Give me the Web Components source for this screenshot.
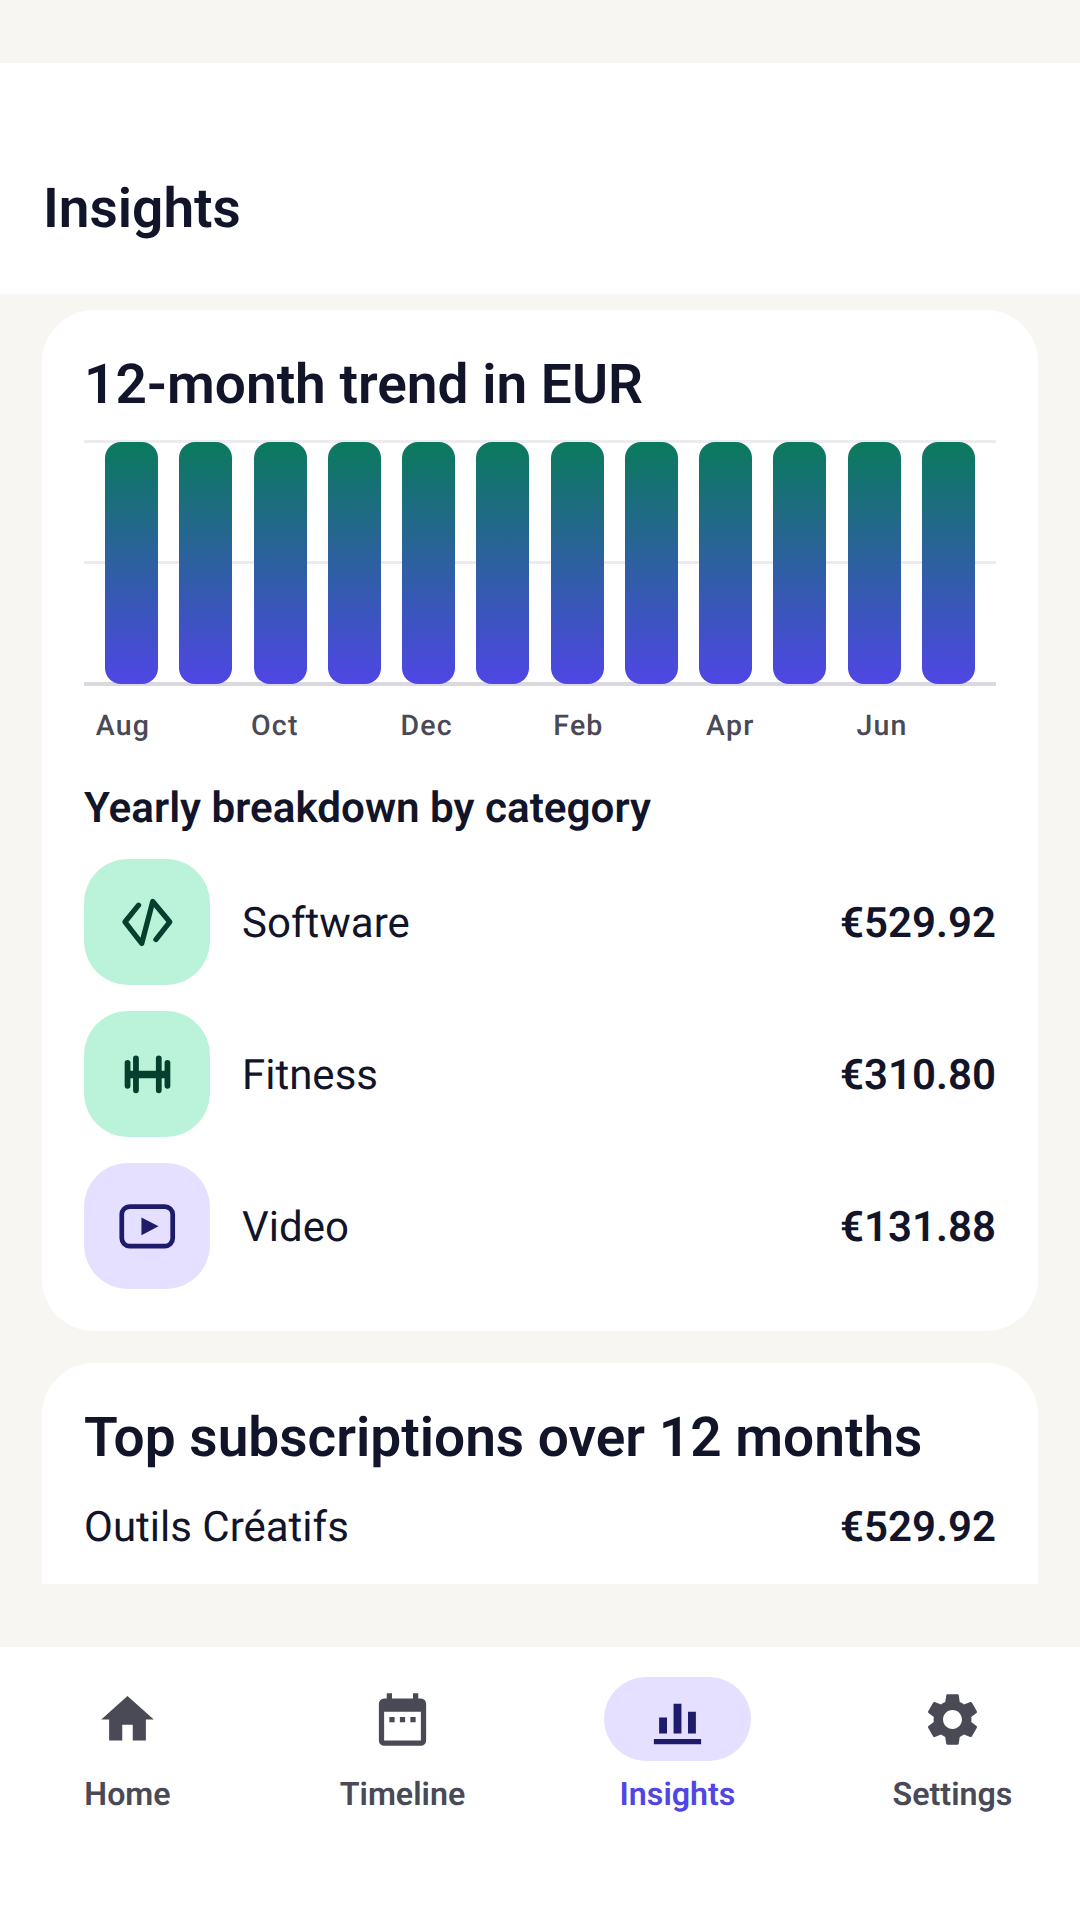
<!DOCTYPE html>
<html lang="en">
<head>
<meta charset="utf-8">
<title>Insights</title>
<style>
  html, body { margin: 0; padding: 0; background: #f7f6f2; }
  body { width: 1080px; height: 1920px; overflow: hidden; font-family: Roboto, "Liberation Sans", sans-serif; color: #12152a; text-rendering: geometricPrecision; }
</style>
</head>
<body>
<insights-page>
  <span slot="title">Insights</span>
  <ui-card heading="12-month trend in EUR">
    <bar-chart labels="Aug,,Oct,,Dec,,Feb,,Apr,,Jun," bars="12"></bar-chart>
    <h3-label>Yearly breakdown by category</h3-label>
    <category-row name="Software" amount="€529.92" tone="green" icon="code"></category-row>
    <category-row name="Fitness" amount="€310.80" tone="green" icon="fitness"></category-row>
    <category-row name="Video" amount="€131.88" tone="violet" icon="video"></category-row>
  </ui-card>
  <ui-card heading="Top subscriptions over 12 months" clipped>
    <sub-row name="Outils Créatifs" amount="€529.92"></sub-row>
  </ui-card>
  <bottom-nav slot="nav">
    <nav-item label="Home" icon="home"></nav-item>
    <nav-item label="Timeline" icon="calendar"></nav-item>
    <nav-item label="Insights" icon="insights" active></nav-item>
    <nav-item label="Settings" icon="settings"></nav-item>
  </bottom-nav>
</insights-page>

<script>
const html = String.raw;

const ICONS = {
  home: html`<path fill="currentColor" d="M10 20v-6h4v6h5v-8h3L12 3 2 12h3v8z"/>`,
  calendar: html`<path fill="currentColor" d="M19 4h-1V2h-2v2H8V2H6v2H5a2 2 0 0 0-2 2v14a2 2 0 0 0 2 2h14a2 2 0 0 0 2-2V6a2 2 0 0 0-2-2zm0 16H5V9h14v11zM7 11h2v2H7zm4 0h2v2h-2zm4 0h2v2h-2z"/>`,
  insights: html`<path fill="currentColor" d="M5 11.2h3v6.1H5zM10.5 6h3v11.3h-3zM16 9h3v8.3h-3zM3 19.4h18v2H3z"/>`,
  settings: html`<path fill="currentColor" d="M19.14 12.94c.04-.3.06-.61.06-.94 0-.32-.02-.64-.07-.94l2.03-1.58c.18-.14.23-.41.12-.61l-1.92-3.32c-.12-.22-.37-.29-.59-.22l-2.39.96c-.5-.38-1.03-.7-1.62-.94l-.36-2.54c-.04-.24-.24-.41-.48-.41h-3.84c-.24 0-.43.17-.47.41l-.36 2.54c-.59.24-1.13.57-1.62.94l-2.39-.96c-.22-.08-.47 0-.59.22L2.74 8.87c-.12.21-.08.47.12.61l2.03 1.58c-.05.3-.09.63-.09.94s.02.64.07.94l-2.03 1.58c-.18.14-.23.41-.12.61l1.92 3.32c.12.22.37.29.59.22l2.39-.96c.5.38 1.03.7 1.62.94l.36 2.54c.05.24.24.41.48.41h3.84c.24 0 .44-.17.47-.41l.36-2.54c.59-.24 1.13-.56 1.62-.94l2.39.96c.22.08.47 0 .59-.22l1.92-3.32c.12-.22.07-.47-.12-.61l-2.01-1.58zM12 15.6c-1.98 0-3.6-1.62-3.6-3.6s1.62-3.6 3.6-3.6 3.6 1.62 3.6 3.6-1.62 3.6-3.6 3.6z"/>`,
  code: html`<path fill="none" stroke="currentColor" stroke-width="2" stroke-linecap="round" stroke-linejoin="round" d="M8.6 5.4 3.4 11.8 9.8 20 14 4l6.5 7.8-5.3 6.7"/>`,
  fitness: html`<path fill="none" stroke="currentColor" stroke-width="2.2" stroke-linecap="round" d="M4.4 7.55v8.75M7.6 5.9V18M16.3 5.9V18M19.6 7.55v8.75"/><path fill="none" stroke="currentColor" stroke-width="2.8" d="M4.4 12h15.2"/>`,
  video: html`<rect x="2.2" y="4.4" width="19.4" height="15.1" rx="3" fill="none" stroke="currentColor" stroke-width="1.8"/><path fill="currentColor" d="M9.7 8.6 16.2 11.9 9.7 15.3z"/>`,
};

const icon = (name) => html`<svg viewBox="0 0 24 24" width="63" height="63" aria-hidden="true">${ICONS[name]}</svg>`;

class InsightsPage extends HTMLElement {
  constructor() {
    super();
    this.attachShadow({ mode: "open" });
    this.shadowRoot.innerHTML = html`
      <style>
        :host { display: flex; flex-direction: column; width: 1080px; height: 1920px; }
        .status { height: 63px; flex: none; }
        header {
          height: 231px; flex: none; box-sizing: border-box; background: #fff;
          display: flex; align-items: flex-end; padding: 0 43px 51px;
          font-size: 55px; font-weight: 600; line-height: 68px; color: #12152a;
        }
        main {
          height: 1290px; flex: none; overflow: hidden; box-sizing: border-box;
          padding: 16px 42px 0; display: flex; flex-direction: column; gap: 32px;
        }
        .rest { flex: 1; display: flex; flex-direction: column; justify-content: flex-end; }
      </style>
      <div class="status"></div>
      <header><slot name="title"></slot></header>
      <main><slot></slot></main>
      <div class="rest"><slot name="nav"></slot></div>
    `;
  }
}

class UiCard extends HTMLElement {
  constructor() {
    super();
    this.attachShadow({ mode: "open" });
  }
  connectedCallback() {
    this.shadowRoot.innerHTML = html`
      <style>
        :host {
          display: block; flex: none; background: #fff; border-radius: 52px;
          padding: 41px 42px 42px;
        }
        /* runs on below the fold of the scroll area */
        :host([clipped]) { padding-bottom: 160px; }
        h2 { margin: 0; font-size: 55px; font-weight: 600; line-height: 68px; color: #12152a; }
      </style>
      <h2>${this.getAttribute("heading")}</h2>
      <slot></slot>
    `;
  }
}

class BarChart extends HTMLElement {
  constructor() {
    super();
    this.attachShadow({ mode: "open" });
  }
  connectedCallback() {
    const count = Number(this.getAttribute("bars"));
    const labels = this.getAttribute("labels").split(",");
    this.shadowRoot.innerHTML = html`
      <style>
        :host { display: block; margin-top: 21px; }
        .plot {
          height: 246px; box-sizing: border-box; padding: 2px 21px;
          display: flex; justify-content: space-between;
          background:
            linear-gradient(#ecebf1, #ecebf1) 0 0 / 100% 3px no-repeat,
            linear-gradient(#ecebf1, #ecebf1) 0 121px / 100% 3px no-repeat,
            linear-gradient(#dad8e1, #dad8e1) 0 242px / 100% 4px no-repeat;
        }
        .bar {
          width: 53px; height: 242px; border-radius: 16px;
          background: linear-gradient(#0b7a5c, #4f46e5);
        }
        .labels {
          display: grid; grid-template-columns: repeat(12, 1fr);
          padding: 22px 0 0 1px; text-align: center;
          font-size: 28.5px; line-height: 36px; font-weight: 500; letter-spacing: 1.2px; color: #4a4a57;
        }
      </style>
      <div class="plot">${'<div class="bar"></div>'.repeat(count)}</div>
      <div class="labels">${labels.map((l) => `<span>${l}</span>`).join("")}</div>
    `;
  }
}

class H3Label extends HTMLElement {
  constructor() {
    super();
    this.attachShadow({ mode: "open" });
    this.shadowRoot.innerHTML = html`
      <style>
        :host {
          display: block; margin: 41px 0 26px;
          font-size: 42.2px; line-height: 48px; font-weight: 600; color: #12152a;
        }
      </style>
      <slot></slot>
    `;
  }
}

class CategoryRow extends HTMLElement {
  constructor() {
    super();
    this.attachShadow({ mode: "open" });
  }
  connectedCallback() {
    const tone = this.getAttribute("tone");
    this.shadowRoot.innerHTML = html`
      <style>
        :host { display: flex; align-items: center; height: 126px; margin-bottom: 26px; font-size: 42px; color: #12152a; }
        :host(:last-of-type) { margin-bottom: 0; }
        .tile {
          width: 126px; height: 126px; border-radius: 44px; flex: none;
          display: flex; align-items: center; justify-content: center;
        }
        .tile.green { background: #bbf3da; color: #053f2e; }
        .tile.violet { background: #e5e0ff; color: #1e1b6b; }
        svg { display: block; }
        .name { margin-left: 32px; flex: 1; }
        .amount { font-weight: 600; }
        .name, .amount { padding-top: 2px; }
      </style>
      <div class="tile ${tone}">${icon(this.getAttribute("icon"))}</div>
      <span class="name">${this.getAttribute("name")}</span>
      <span class="amount">${this.getAttribute("amount")}</span>
    `;
  }
}

class SubRow extends HTMLElement {
  constructor() {
    super();
    this.attachShadow({ mode: "open" });
  }
  connectedCallback() {
    this.shadowRoot.innerHTML = html`
      <style>
        :host {
          display: flex; justify-content: space-between; align-items: center;
          height: 56px; margin-top: 27px; font-size: 42px; color: #12152a;
        }
        .amount { font-weight: 600; }
      </style>
      <span>${this.getAttribute("name")}</span>
      <span class="amount">${this.getAttribute("amount")}</span>
    `;
  }
}

class BottomNav extends HTMLElement {
  constructor() {
    super();
    this.attachShadow({ mode: "open" });
    this.shadowRoot.innerHTML = html`
      <style>
        :host {
          display: grid; grid-template-columns: repeat(4, 275px); justify-content: center;
          height: 273px; box-sizing: border-box; padding-top: 30px; background: #fff;
        }
      </style>
      <slot></slot>
    `;
  }
}

class NavItem extends HTMLElement {
  constructor() {
    super();
    this.attachShadow({ mode: "open" });
  }
  connectedCallback() {
    this.shadowRoot.innerHTML = html`
      <style>
        :host {
          display: flex; flex-direction: column; align-items: center;
          font-size: 32.2px; font-weight: 600; line-height: 44px; color: #4a4a57;
        }
        :host([active]) { color: #4f46e5; }
        .pill {
          width: 147px; height: 84px; border-radius: 42px;
          display: flex; align-items: center; justify-content: center;
        }
        :host([active]) .pill { background: #e5e0ff; color: #1e1b6b; }
        svg { display: block; }
        .label { margin-top: 11px; }
      </style>
      <div class="pill">${icon(this.getAttribute("icon"))}</div>
      <span class="label">${this.getAttribute("label")}</span>
    `;
  }
}

customElements.define("insights-page", InsightsPage);
customElements.define("ui-card", UiCard);
customElements.define("bar-chart", BarChart);
customElements.define("h3-label", H3Label);
customElements.define("category-row", CategoryRow);
customElements.define("sub-row", SubRow);
customElements.define("bottom-nav", BottomNav);
customElements.define("nav-item", NavItem);
</script>
</body>
</html>
